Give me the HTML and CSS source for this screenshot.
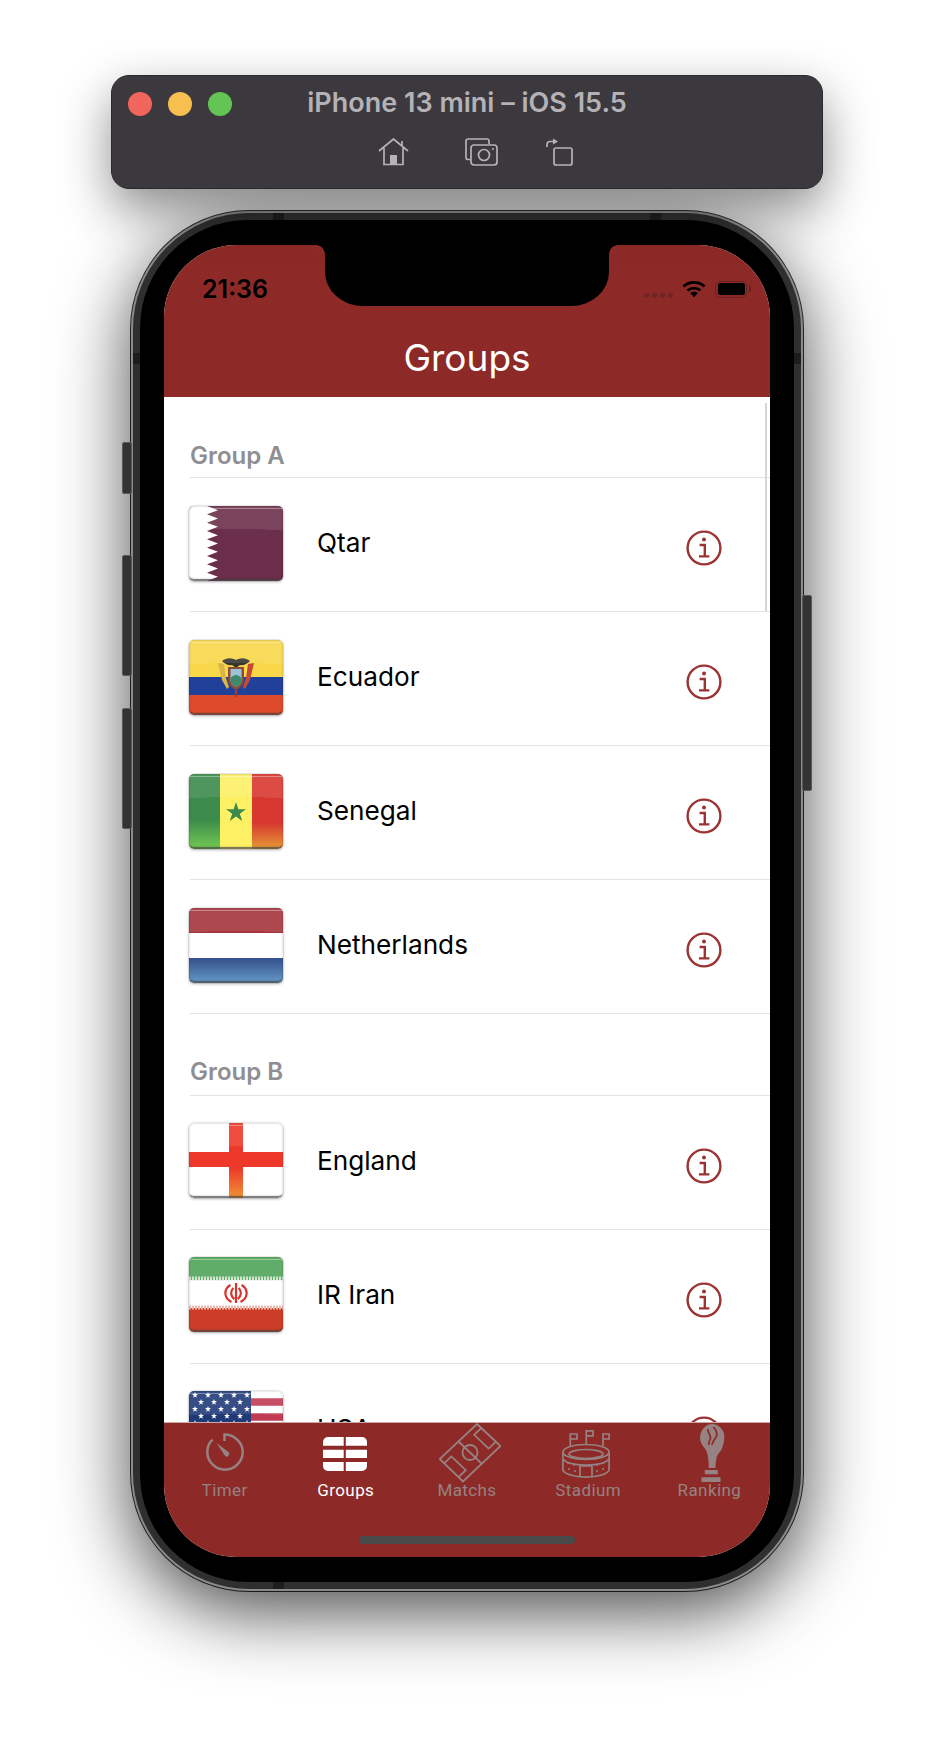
FILE: index.html
```html
<!DOCTYPE html>
<html lang="en">
<head>
<meta charset="utf-8">
<title>Groups</title>
<link rel="stylesheet" href="styles.css">
</head>
<body>
<svg class="defs" width="0" height="0" aria-hidden="true">
  <symbol id="info" viewBox="0 0 36 36">
    <circle cx="18" cy="18" r="16.4" fill="none" stroke="currentColor" stroke-width="2.4"/>
    <circle cx="18" cy="9.6" r="2" fill="currentColor"/>
    <path d="M13.6 15h5.2v11M13 26.4h10.4" fill="none" stroke="currentColor" stroke-width="2.4"/>
  </symbol>
  <symbol id="star" viewBox="0 0 6 6" overflow="visible">
    <path d="m3 0 .8 2.100H6L4.200 3.500 4.900 5.700 3 4.400 1.100 5.700 1.800 3.500 0 2.100h2.200z" fill="#fff"/>
  </symbol>
</svg>

<div class="window">
  <div class="lights"><span class="light red"></span><span class="light yellow"></span><span class="light green"></span></div>
  <div class="window-title">iPhone 13 mini – iOS 15.5</div>
  <div class="window-tools">
    <svg class="tool" width="31" height="28" viewBox="0 0 31 28"><path d="M1 13 15.500 1 30 13M6 10v16.500h19V10M24 8.500V3" fill="none" stroke="#b5b3b7" stroke-width="1.700"/><path d="M12 17h7v9.500h-7z" fill="#b5b3b7"/></svg>
    <svg class="tool" width="33" height="28" viewBox="0 0 33 28"><path d="M5 21.500H3a2 2 0 0 1-2-2V3a2 2 0 0 1 2-2h19a2 2 0 0 1 2 2v3" fill="none" stroke="#b5b3b7" stroke-width="1.700"/><rect x="6" y="7" width="26" height="20" rx="3" fill="none" stroke="#b5b3b7" stroke-width="1.700"/><circle cx="19" cy="17" r="5.500" fill="none" stroke="#b5b3b7" stroke-width="1.700"/><circle cx="28" cy="11" r="1" fill="#b5b3b7"/></svg>
    <svg class="tool" width="28" height="28" viewBox="0 0 28 28"><rect x="8" y="10" width="18" height="17" rx="2" fill="none" stroke="#b5b3b7" stroke-width="1.700"/><path d="M1 9V6.500a3 3 0 0 1 3-3h4" fill="none" stroke="#b5b3b7" stroke-width="1.700"/><path d="M7 .5l5 3-5 3z" fill="#b5b3b7"/></svg>
  </div>
</div>

<div class="phone">
  <span class="side-btn mute"></span>
  <span class="side-btn vol-up"></span>
  <span class="side-btn vol-down"></span>
  <span class="side-btn power"></span>
  <span class="band top-l"></span>
  <span class="band top-r"></span>
  <span class="band bottom-l"></span>
  <span class="band side-l"></span>
  <span class="band side-r"></span>
  <div class="bezel">
    <div class="screen">
      <div class="notch"></div>
      <header class="nav">
        <div class="status">
          <span class="clock">21:36</span>
          <div class="status-icons">
            <span class="signal"><i></i><i></i><i></i><i></i></span>
            <svg width="24" height="18" viewBox="0 0 24 18"><path d="M1.500 6.500C7.500 1 16.500 1 22.500 6.500M5.500 10.500c3.800-3.300 9.200-3.300 13 0M9 14c1.800-1.400 4.200-1.400 6 0" fill="none" stroke="#000" stroke-width="2.800"/><path d="M9.600 14.500 12 17.500l2.400-3q-2.400-1.700-4.800 0z" fill="#000"/></svg>
            <span class="battery"><i></i></span>
          </div>
        </div>
        <h1 class="nav-title">Groups</h1>
      </header>

      <main class="list">
        <span class="scrollbar"></span>

        <h2 class="section first">Group A</h2>
        <div class="row">
          <span class="flag">
            <svg viewBox="0 0 94 75"><rect width="94" height="75" fill="#6c2f4b"/><path d="M0 0h18l11 4.200-11 4.100 11 4.200-11 4.200 11 4.100-11 4.200 11 4.200-11 4.100 11 4.200-11 4.200 11 4.100-11 4.200 11 4.200-11 4.100 11 4.200-11 4.200 11 4.100-11 4.200H0z" fill="#fff"/></svg>
          </span>
          <span class="name">Qtar</span>
          <svg class="info"><use href="#info"/></svg>
        </div>
        <div class="row">
          <span class="flag">
            <svg viewBox="0 0 94 75"><rect width="94" height="38" fill="#f8d748"/><rect y="37" width="94" height="18" fill="#20409a"/><rect y="55" width="94" height="20" fill="#de4b2a"/><path d="M29 23l4 17 5 9 2-2-3-9-2-14z" fill="#d9b648"/><path d="M65 23l-4 17-5 9-2-2 3-9 2-14z" fill="#c64a33"/><path d="M33 21c5-4 10-3 14-1 4-2 9-3 14 1-3 3-7 5-10 4l-4 3-4-3c-3 1-7-1-10-4z" fill="#37352f"/><path d="M39 27h16v13c0 5-4 8-8 10-4-2-8-5-8-10z" fill="#8c4a3a"/><path d="M41.500 29h11v11c0 3.500-2.700 5.500-5.500 7-2.800-1.500-5.500-3.500-5.500-7z" fill="#9fc3d6"/><path d="M41.500 38c3.500-4 7.500-4 11 0v2c0 3.500-2.700 5.500-5.500 7-2.800-1.500-5.500-3.500-5.500-7z" fill="#3f8a6a"/><path d="M46 50h2v7h-2z" fill="#a33b36"/></svg>
          </span>
          <span class="name">Ecuador</span>
          <svg class="info"><use href="#info"/></svg>
        </div>
        <div class="row">
          <span class="flag">
            <svg viewBox="0 0 94 75"><defs><linearGradient id="sg" x1="0" y1="0" x2="0" y2="1"><stop offset=".6" stop-color="#3a8b4c"/><stop offset="1" stop-color="#72c952"/></linearGradient><linearGradient id="sr" x1="0" y1="0" x2="0" y2="1"><stop offset=".65" stop-color="#d8372f"/><stop offset="1" stop-color="#e49a35"/></linearGradient></defs><rect width="31" height="75" fill="url(#sg)"/><rect x="31" width="32" height="75" fill="#fdf064"/><rect x="63" width="31" height="75" fill="url(#sr)"/><path d="m47 28 2.400 7.300H57l-6.200 4.500 2.400 7.300-6.200-4.500-6.200 4.500 2.400-7.300L37 35.300h7.600z" fill="#3a8b4c"/></svg>
          </span>
          <span class="name">Senegal</span>
          <svg class="info"><use href="#info"/></svg>
        </div>
        <div class="row">
          <span class="flag">
            <svg viewBox="0 0 94 75"><defs><linearGradient id="nb" x1="0" y1="0" x2="0" y2="1"><stop offset="0" stop-color="#35508c"/><stop offset="1" stop-color="#649ac6"/></linearGradient></defs><rect width="94" height="25" fill="#a5343c"/><rect y="25" width="94" height="25" fill="#fff"/><rect y="50" width="94" height="25" fill="url(#nb)"/></svg>
          </span>
          <span class="name">Netherlands</span>
          <svg class="info"><use href="#info"/></svg>
        </div>

        <h2 class="section">Group B</h2>
        <div class="row">
          <span class="flag">
            <svg viewBox="0 0 94 75"><defs><linearGradient id="eb" x1="0" y1="0" x2="0" y2="1"><stop offset=".6" stop-color="#ee382a"/><stop offset="1" stop-color="#f09432"/></linearGradient></defs><rect width="94" height="75" fill="#fff"/><rect x="40" width="14" height="75" fill="url(#eb)"/><rect y="29" width="94" height="15" fill="#ee382a"/></svg>
          </span>
          <span class="name">England</span>
          <svg class="info"><use href="#info"/></svg>
        </div>
        <div class="row">
          <span class="flag">
            <svg viewBox="0 0 94 75"><rect width="94" height="23" fill="#4fa458"/><rect y="23" width="94" height="28" fill="#fff"/><rect y="51" width="94" height="24" fill="#cb3d27"/><path d="M0 21.500h94" stroke="#cfe3cc" stroke-width="4" stroke-dasharray="2 1"/><path d="M0 50.500h94" stroke="#f0b7ae" stroke-width="4" stroke-dasharray="2 1"/><g fill="none" stroke="#d8322a" stroke-width="2.200"><path d="M47 26v20M41.500 28c-7 4-7 13 1 17M52.500 28c7 4 7 13-1 17M44.300 31c-3 3-3 8 1 11M49.700 31c3 3 3 8-1 11"/></g></svg>
          </span>
          <span class="name">IR Iran</span>
          <svg class="info"><use href="#info"/></svg>
        </div>
        <div class="row">
          <span class="flag">
            <svg viewBox="0 0 94 75"><rect width="94" height="75" fill="#fff"/><path d="M0 11h94M0 26h94M0 41h94" stroke="#c03a54" stroke-width="7.500"/><rect width="62" height="40" fill="#203a78"/><use href="#star" x="3" y="1" width="6" height="6"/><use href="#star" x="16" y="1" width="6" height="6"/><use href="#star" x="29" y="1" width="6" height="6"/><use href="#star" x="42" y="1" width="6" height="6"/><use href="#star" x="55" y="1" width="6" height="6"/><use href="#star" x="9" y="8" width="6" height="6"/><use href="#star" x="22" y="8" width="6" height="6"/><use href="#star" x="35" y="8" width="6" height="6"/><use href="#star" x="48" y="8" width="6" height="6"/><use href="#star" x="3" y="15" width="6" height="6"/><use href="#star" x="16" y="15" width="6" height="6"/><use href="#star" x="29" y="15" width="6" height="6"/><use href="#star" x="42" y="15" width="6" height="6"/><use href="#star" x="55" y="15" width="6" height="6"/><use href="#star" x="9" y="22" width="6" height="6"/><use href="#star" x="22" y="22" width="6" height="6"/><use href="#star" x="35" y="22" width="6" height="6"/><use href="#star" x="48" y="22" width="6" height="6"/><use href="#star" x="3" y="29" width="6" height="6"/><use href="#star" x="16" y="29" width="6" height="6"/><use href="#star" x="29" y="29" width="6" height="6"/><use href="#star" x="42" y="29" width="6" height="6"/><use href="#star" x="55" y="29" width="6" height="6"/></svg>
          </span>
          <span class="name">USA</span>
          <svg class="info"><use href="#info"/></svg>
        </div>
      </main>

      <nav class="tabbar">
        <div class="tab">
          <svg class="tab-icon" width="38" height="38" viewBox="0 0 38 38"><path d="M18.500 8V1.500C28 1.500 36.700 9.300 36.700 19S28.700 36.700 19 36.700 1.300 28.700 1.300 19c0-4.800 1.900-9.200 5.200-12.300" fill="none" stroke="currentColor" stroke-width="2.500"/><path d="M10.500 10 22.800 19.300a2.700 2.700 0 0 1-3.700 3.800z" fill="currentColor"/></svg>
          <span class="tab-label">Timer</span>
        </div>
        <div class="tab active">
          <svg class="tab-icon" width="44" height="34" viewBox="0 0 44 34"><path d="M5 0h15.700v8.700H0V5a5 5 0 0 1 5-5zM22.800 0H39a5 5 0 0 1 5 5v3.700H22.800zM0 12.700h20.700V21H0zM22.800 12.700H44V21H22.800zM0 25h20.700v9H5a5 5 0 0 1-5-5zM22.800 25H44v4a5 5 0 0 1-5 5H22.800z" fill="currentColor"/></svg>
          <span class="tab-label">Groups</span>
        </div>
        <div class="tab">
          <svg class="tab-icon" width="62" height="60" viewBox="0 0 62 60"><g fill="none" stroke="currentColor" stroke-width="1.800" stroke-linejoin="miter"><path d="M38 1 61.500 23 24 58.500.7 36z"/><path d="M19 18 43 41"/><circle cx="31" cy="29.500" r="7.500"/><path d="M42.800 4.600 35.200 11.800 49.600 25.600 57.200 18.400"/><path d="M4.800 40.600 12.400 33.400 26.800 47.200 19.200 54.400"/></g></svg>
          <span class="tab-label">Matchs</span>
        </div>
        <div class="tab">
          <svg class="tab-icon" width="48" height="48" viewBox="0 0 48 48"><g fill="none" stroke="currentColor" stroke-width="1.700"><path d="M.9 22v18c1.500 4 11 7.100 23.100 7.100S45.600 44 47.100 40V22"/><ellipse cx="24" cy="22" rx="23.100" ry="7.500"/><ellipse cx="24" cy="24" rx="17" ry="4.500"/><path d="M1 29c3 4 12 6 23 6s20-2 23-6M18 47V36h12v11"/><path d="M8.300 16V4h6.700v5H8.300M24.300 14V.9H31v5h-6.700M41 16V4h6.100v5H41"/><path d="M6 33v.1M12 35v.1M7 39v.1M13 41v.1M35 35v.1M41 33v.1M41 39v.1M35 41v.1" stroke-linecap="round" stroke-width="2"/></g></svg>
          <span class="tab-label">Stadium</span>
        </div>
        <div class="tab">
          <svg class="tab-icon trophy" width="25" height="58" viewBox="0 0 25 58"><path d="M12.500 0C19 0 25 6 25 12.700c0 5-1.500 8-2.300 11.300-1.200 3.500-4.700 5.500-5.700 10-.7 3-1 7-1 10H9.300c0-5-.3-10-1.600-15C6.500 24 1 21 .6 15 .2 7 5.500 0 12.500 0z" fill="currentColor"/><path d="M8.500 5c-1 4 3 5 2.500 9-.3 3-2.500 4-1.500 7M14 3c2 3 4.500 5 3 9-1.500 3.500-4 5-4.500 9" fill="none" stroke="#8d2a27" stroke-width="1.800"/><path d="M5.300 46h13v4.300h-13zM2 53.300h19V58H2z" fill="currentColor"/></svg>
          <span class="tab-label">Ranking</span>
        </div>
        <span class="home-bar"></span>
      </nav>
    </div>
  </div>
</div>
</body>
</html>
```

FILE: styles.css
```css
* { box-sizing: border-box; }
html, body { margin: 0; padding: 0; }
body {
  width: 934px;
  height: 1742px;
  overflow: hidden;
  background: #fff;
  padding: 75px 0 0 0;
  font-family: "Inter", "Liberation Sans", sans-serif;
}
.defs { position: absolute; }

.window {
  position: relative;
  z-index: 2;
  width: 712px;
  height: 114px;
  margin-left: 111px;
  background: #3b393e;
  border: 1px solid #2a292c;
  border-radius: 18px;
  box-shadow: 0 20px 50px rgba(0,0,0,.45);
  display: flex;
  flex-direction: column;
  align-items: center;
  padding-top: 12px;
}
.lights { position: absolute; left: 16px; top: 16px; display: flex; gap: 16px; }
.light { width: 24px; height: 24px; border-radius: 50%; }
.red { background: #f1655c; }
.yellow { background: #f6bf4f; }
.green { background: #62c554; }
.window-title {
  font-size: 27px;
  font-weight: 600;
  line-height: 30px;
  color: #b4b2b6;
}
.window-tools { display: flex; align-items: flex-end; margin: 20px 0 0 18px; }
.tool { display: block; }
.tool:nth-child(2) { margin: 0 48px 0 56px; }

.phone {
  position: relative;
  width: 672px;
  height: 1380px;
  margin: 22px 0 0 131px;
  padding: 7px;
  border-radius: 118px;
  background: #2f2f2f;
  border: 2px solid #8a8a8a;
  box-shadow: 0 20px 72px rgba(0,0,0,.72), 0 0 0 1px #333;
}
.side-btn { position: absolute; width: 10px; background: #333; border: 1px solid #5a5a5a; border-radius: 2px; }
.mute { left: -11px; top: 229px; height: 52px; }
.vol-up { left: -11px; top: 342px; height: 121px; }
.vol-down { left: -11px; top: 495px; height: 121px; }
.power { right: -11px; top: 382px; height: 196px; }

.band { position: absolute; background: #1d1d1d; }
.top-l { left: 140px; top: 0; width: 11px; height: 7px; }
.top-r { left: 517px; top: 0; width: 11px; height: 7px; }
.bottom-l { left: 140px; bottom: 0; width: 11px; height: 7px; }
.side-l { left: 0; top: 140px; width: 7px; height: 11px; }
.side-r { right: 0; top: 140px; width: 7px; height: 11px; }

.bezel {
  position: relative;
  width: 654px;
  height: 1362px;
  padding: 25px 24px;
  background: #000;
  border-radius: 108px;
}
.screen {
  position: relative;
  width: 606px;
  height: 1312px;
  background: #fff;
  border-radius: 72px;
  overflow: hidden;
  display: flex;
  flex-direction: column;
}
.notch {
  position: absolute;
  z-index: 3;
  left: 161px;
  top: 0;
  width: 284px;
  height: 61px;
  background: #000;
  border-radius: 0 0 38px 38px / 0 0 34px 34px;
}
.notch::before, .notch::after {
  content: "";
  position: absolute;
  top: 0;
  width: 9px;
  height: 9px;
}
.notch::before { left: -9px; background: radial-gradient(circle at 0 100%, #8d2a27 8.500px, #000 9px); }
.notch::after { right: -9px; background: radial-gradient(circle at 100% 100%, #8d2a27 8.500px, #000 9px); }

.nav { flex: none; height: 152px; background: #8d2a27; display: flex; flex-direction: column; }
.status { flex: none; height: 70px; display: flex; align-items: center; justify-content: space-between; padding: 18px 23px 0 38px; }
.clock { font-size: 25px; font-weight: 600; line-height: 30px; color: #000; }
.status-icons { display: flex; align-items: center; gap: 9px; }
.signal { display: flex; gap: 3px; margin-top: 13px; }
.signal i { width: 5px; height: 5.500px; border-radius: 50%; background: #6e2525; }
.battery { position: relative; display: block; width: 32px; height: 17px; border: 1.500px solid #6a2020; border-radius: 5px; padding: 1.500px; }
.battery::after { content: ""; position: absolute; right: -5px; top: 3.500px; width: 2px; height: 7px; border-radius: 0 2px 2px 0; background: #6a2020; }
.battery i { display: block; height: 100%; background: #000; border-radius: 2.500px; }
.nav-title { margin: 21px 0 0; text-align: center; font-size: 37px; font-weight: 400; line-height: 44px; color: #fff; }

.list { position: relative; flex: 1 1 0; min-height: 0; overflow: hidden; background: #fff; }
.scrollbar { position: absolute; left: 601px; top: 6px; width: 1.500px; height: 208px; background: #d6d6d6; }
.section {
  margin: 0 0 0 26px;
  height: 81.500px;
  padding-top: 44px;
  border-bottom: 1.500px solid #e4e4e4;
  font-size: 24px;
  font-weight: 600;
  line-height: 28px;
  color: #8e8e93;
}
.section.first { height: 81px; padding-top: 45px; }
.row {
  position: relative;
  margin-left: 26px;
  height: 134px;
  display: flex;
  align-items: center;
  border-bottom: 1.500px solid #e4e4e4;
}
.flag {
  position: relative;
  flex: none;
  display: block;
  width: 94px;
  height: 75px;
  margin: -3px 0 0 -1px;
  border-radius: 5px;
  overflow: hidden;
  box-shadow: 0 1px 3px rgba(0,0,0,.3), 0 0 0 .5px rgba(0,0,0,.12);
}
.flag svg { display: block; width: 94px; height: 75px; }
.flag::after {
  content: "";
  position: absolute;
  inset: 0;
  border-radius: 5px;
  border-bottom: 2px solid rgba(60,60,60,.65);
  box-shadow: inset 0 0 2px rgba(0,0,0,.3);
  background:
    linear-gradient(180deg, rgba(255,255,255,0) 2px, rgba(255,255,255,.35) 2px, rgba(255,255,255,.35) 3px, rgba(255,255,255,0) 3px),
    radial-gradient(ellipse 200% 69% at 50% 100%, rgba(255,255,255,0) 99%, rgba(255,255,255,.1) 100%);
}
.name { margin: -3px 0 0 34px; font-size: 26.200px; line-height: 34px; color: #000; }
.info { position: absolute; left: 496px; top: 52px; width: 36px; height: 36px; color: #9b3333; }

.tabbar {
  position: relative;
  flex: none;
  height: 135px;
  background: #8d2a27;
  border-top: 1.500px solid #c9a7a6;
  display: grid;
  grid-template-columns: repeat(5, 1fr);
  align-items: start;
}
.tab { position: relative; height: 76px; color: #968282; text-align: center; }
.tab.active { color: #fff; }
.tab-icon { position: absolute; left: 50%; transform: translateX(-50%); }
.tab:nth-child(1) .tab-icon { top: 10px; }
.tab:nth-child(2) .tab-icon { top: 13.500px; margin-left: -1px; }
.tab:nth-child(3) .tab-icon { top: 0; margin-left: 3px; }
.tab:nth-child(4) .tab-icon { top: 7px; margin-left: -2px; }
.tab:nth-child(5) .tab-icon { top: 1px; margin-left: 3px; }
.tab-label {
  display: block;
  margin-top: 57px;
  font-family: "Roboto", "Liberation Sans", sans-serif;
  font-size: 17px;
  line-height: 20px;
  letter-spacing: .4px;
}
.home-bar { position: absolute; left: 195px; top: 113px; width: 216px; height: 8px; border-radius: 4px; background: #4a4a4a; }
```
